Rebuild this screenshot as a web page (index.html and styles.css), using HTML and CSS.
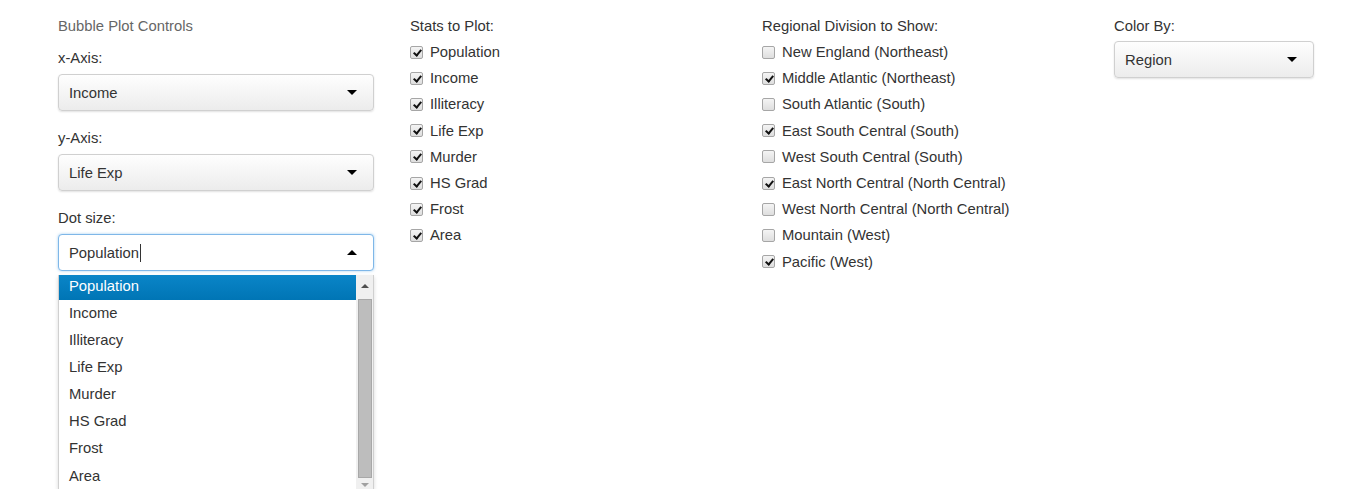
FILE: index.html
```html
<!DOCTYPE html>
<html>
<head>
<meta charset="utf-8">
<link rel="stylesheet" href="styles.css">
</head>
<body>
<div class="row">
  <div class="col">
    <div class="title">Bubble Plot Controls</div>
    <div class="group">
      <div class="label">x-Axis:</div>
      <div class="select"><span>Income</span><span class="caret"></span></div>
    </div>
    <div class="group">
      <div class="label">y-Axis:</div>
      <div class="select"><span>Life Exp</span><span class="caret"></span></div>
    </div>
    <div class="group open">
      <div class="label">Dot size:</div>
      <div class="select focus"><span>Population<span class="cursor"></span></span><span class="caret up"></span></div>
      <div class="dropdown">
        <div class="options">
          <div class="opt active first">Population</div>
          <div class="opt">Income</div>
          <div class="opt">Illiteracy</div>
          <div class="opt">Life Exp</div>
          <div class="opt">Murder</div>
          <div class="opt">HS Grad</div>
          <div class="opt">Frost</div>
          <div class="opt">Area</div>
        </div>
        <div class="scrollbar">
          <div class="sb-up"></div>
          <div class="sb-thumb"></div>
          <div class="sb-down"></div>
        </div>
      </div>
    </div>
  </div>
  <div class="col">
    <div class="label top">Stats to Plot:</div>
    <div class="check"><span class="box on"></span>Population</div>
    <div class="check"><span class="box on"></span>Income</div>
    <div class="check"><span class="box on"></span>Illiteracy</div>
    <div class="check"><span class="box on"></span>Life Exp</div>
    <div class="check"><span class="box on"></span>Murder</div>
    <div class="check"><span class="box on"></span>HS Grad</div>
    <div class="check"><span class="box on"></span>Frost</div>
    <div class="check"><span class="box on"></span>Area</div>
  </div>
  <div class="col">
    <div class="label top">Regional Division to Show:</div>
    <div class="check"><span class="box"></span>New England (Northeast)</div>
    <div class="check"><span class="box on"></span>Middle Atlantic (Northeast)</div>
    <div class="check"><span class="box"></span>South Atlantic (South)</div>
    <div class="check"><span class="box on"></span>East South Central (South)</div>
    <div class="check"><span class="box"></span>West South Central (South)</div>
    <div class="check"><span class="box on"></span>East North Central (North Central)</div>
    <div class="check"><span class="box"></span>West North Central (North Central)</div>
    <div class="check"><span class="box"></span>Mountain (West)</div>
    <div class="check"><span class="box on"></span>Pacific (West)</div>
  </div>
  <div class="col">
    <div class="label tight">Color By:</div>
    <div class="select narrow"><span>Region</span><span class="caret"></span></div>
  </div>
</div>
</body>
</html>
```
FILE: styles.css
```css
html, body {
  margin: 0;
  padding: 0;
  background: #fff;
  overflow: hidden;
  height: 489px;
}
body {
  font-family: "Liberation Sans", Arial, sans-serif;
  font-size: 14.8px;
  line-height: 20px;
  color: #333;
}
.row {
  display: grid;
  grid-template-columns: 352px 352px 352px 1fr;
  padding: 16px 0 0 43px;
}
.col {
  padding: 0 15px;
  position: relative;
}
.title {
  color: #666;
  margin-bottom: 12px;
}
.label {
  margin-bottom: 6px;
}
.label.top {
  margin-bottom: 3px;
}
.label.tight {
  margin-bottom: 5px;
}
.group {
  margin-bottom: 17px;
  position: relative;
}
.select {
  width: 316px;
  height: 37px;
  box-sizing: border-box;
  border: 1px solid #d0d0d0;
  border-radius: 4px;
  background: linear-gradient(#fefefe, #ececec);
  box-shadow: 0 1px 2px rgba(0,0,0,0.12);
  display: flex;
  align-items: center;
  justify-content: space-between;
  padding: 0 16px 0 10px;
}
.select.narrow {
  width: 200px;
}
.select.focus {
  background: #fff;
  border-color: #7fb7e8;
  box-shadow: 0 0 3px rgba(102,175,233,0.6);
}
.cursor {
  display: inline-block;
  width: 1px;
  height: 18px;
  background: #333;
  vertical-align: -4px;
  margin-left: 1px;
}
.caret {
  width: 0;
  height: 0;
  border-left: 5px solid transparent;
  border-right: 5px solid transparent;
  border-top: 5px solid #000;
}
.caret.up {
  border-top: 0;
  border-bottom: 5px solid #000;
}
.dropdown {
  position: absolute;
  top: calc(100% + 4px);
  left: 0;
  width: 316px;
  height: 214px;
  box-sizing: border-box;
  border: 1px solid #d0d0d0;
  border-top: 0;
  border-bottom: 0;
  background: #fff;
  box-shadow: 0 2px 4px rgba(0,0,0,0.15);
  display: flex;
  overflow: hidden;
}
.options {
  flex: 1;
}
.opt {
  height: 27.1px;
  line-height: 27px;
  padding-left: 10px;
}
.opt.first {
  height: 25px;
  line-height: 23px;
}
.opt.active {
  background: linear-gradient(#0a85c8, #0075b5);
  color: #fff;
}
.scrollbar {
  width: 17px;
  background: #f0f0f0;
  display: flex;
  flex-direction: column;
  align-items: center;
}
.sb-up, .sb-down {
  width: 0;
  height: 0;
  border-left: 4px solid transparent;
  border-right: 4px solid transparent;
}
.sb-up {
  border-bottom: 4px solid #505050;
  margin: 9px 0 11px;
}
.sb-down {
  border-top: 4px solid #a0a0a0;
  margin-top: 5px;
}
.sb-thumb {
  width: 14px;
  height: 179px;
  box-sizing: border-box;
  background: #bdbdbd;
  border: 1px solid #a8a8a8;
  flex: none;
}
.check {
  height: 26.2px;
  display: flex;
  align-items: center;
}
.box {
  width: 13px;
  height: 13px;
  box-sizing: border-box;
  border: 1px solid #a6a6a6;
  border-radius: 2px;
  background: linear-gradient(#f4f4f4, #dedede);
  margin: 0 7px 0 0;
  position: relative;
  flex: none;
}
.box.on::after {
  content: "";
  position: absolute;
  left: 3.5px;
  top: 1px;
  width: 3px;
  height: 6px;
  border-right: 2px solid #111;
  border-bottom: 2px solid #111;
  transform: rotate(40deg);
}
```
